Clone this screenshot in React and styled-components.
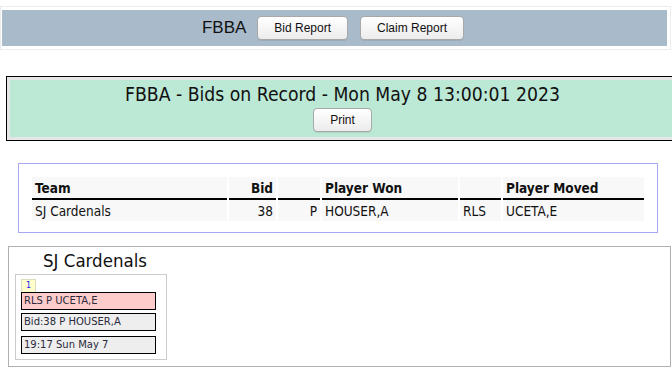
import React from "react";
import styled, { createGlobalStyle } from "styled-components";

const Global = createGlobalStyle`
  html, body { margin: 0; padding: 0; background: #fff; overflow: hidden; }
  body { font-family: "Liberation Sans", Arial, sans-serif; color: #000; }
`;

const Page = styled.div`
  display: flex;
  flex-direction: column;
  align-items: flex-start;
  padding-top: 6px;
`;

const TopFrame = styled.div`
  width: 671px;
  box-sizing: border-box;
  border: 1px solid #ececec;
  padding: 3px 3px 3px 1px;
`;

const TopBar = styled.div`
  height: 36px;
  background: #a9bbcb;
  display: flex;
  align-items: center;
  justify-content: center;
  gap: 11px;
  padding-right: 3px;
`;

const Brand = styled.span`
  font-family: "Liberation Sans", Arial, sans-serif;
  font-size: 17px;
  color: #111;
`;

const Button = styled.button`
  font-family: "Liberation Sans", Arial, sans-serif;
  font-size: 12px;
  color: #111;
  height: 24px;
  padding: 0 ${(p) => p.$pad || 16}px;
  border: 1px solid #a8a8a8;
  border-radius: 4px;
  background: linear-gradient(#ffffff, #ececec);
  box-shadow: 0 1px 0 rgba(0, 0, 0, 0.08);
  margin-left: ${(p) => p.$ml || 0}px;
`;

const TitleFrame = styled.div`
  margin: 26px 0 0 6px;
  width: 673px;
  box-sizing: border-box;
  border: 1px solid #000;
  background: #e6e6e6;
  padding: 3px;
`;

const TitleCell = styled.div`
  background: #bce8d6;
  height: 57px;
  box-sizing: border-box;
  padding-top: 4px;
  display: flex;
  flex-direction: column;
  align-items: center;
  gap: 2px;
`;

const Title = styled.div`
  font-family: "DejaVu Sans Condensed", "DejaVu Sans", sans-serif;
  font-stretch: condensed;
  font-size: 19.2px;
  line-height: 22px;
  color: #111;
`;

const TableBox = styled.div`
  margin: 22px 0 0 18px;
  width: 640px;
  box-sizing: border-box;
  border: 1px solid #a8a8f0;
  padding: 13px 11px 11px 11px;
`;

const Table = styled.table`
  width: 616px;
  border-collapse: separate;
  border-spacing: 2px 0;
  table-layout: fixed;
  font-family: "DejaVu Sans Condensed", "DejaVu Sans", sans-serif;
  font-stretch: condensed;
  font-size: 13.5px;
  color: #111;
`;

const Th = styled.th`
  background: #f8f8f8;
  border-bottom: 2px solid #000;
  height: 21px;
  padding: 0 3px;
  font-weight: bold;
  text-align: ${(p) => p.$align || "left"};
  vertical-align: middle;
`;

const Td = styled.td`
  background: #f8f8f8;
  height: 21px;
  padding: 0 3px;
  text-align: ${(p) => p.$align || "left"};
  vertical-align: middle;
`;

const TeamBox = styled.div`
  margin: 13px 0 0 8px;
  width: 663px;
  box-sizing: border-box;
  border: 1px solid #b0b0b0;
  padding: 0 6px 6px 6px;
`;

const TeamName = styled.div`
  width: 152px;
  padding-left: 4px;
  text-align: center;
  font-family: "DejaVu Sans Condensed", "DejaVu Sans", sans-serif;
  font-stretch: condensed;
  font-size: 18.5px;
  line-height: 27px;
  color: #111;
`;

const Card = styled.div`
  width: 152px;
  box-sizing: border-box;
  border: 1px solid #cccccc;
  padding: 4px 10px 5px 5px;
  display: flex;
  flex-direction: column;
  align-items: flex-start;
`;

const Badge = styled.div`
  width: 15px;
  height: 13px;
  box-sizing: border-box;
  background: #ffffcc;
  border: 1px solid #dcdcc0;
  border-bottom: none;
  font-family: "DejaVu Sans", sans-serif;
  font-size: 8px;
  line-height: 12px;
  color: #1a1aff;
  text-align: center;
`;

const Entry = styled.div`
  width: 135px;
  height: 18px;
  box-sizing: border-box;
  border: 1px solid #000;
  background: ${(p) => p.$bg};
  margin-top: ${(p) => p.$mt || 0}px;
  padding-left: 2px;
  font-family: "DejaVu Sans", sans-serif;
  font-size: 10px;
  line-height: 16px;
  color: #2a2a3a;
  white-space: nowrap;
`;

export default function App() {
  return (
    <>
      <Global />
      <Page>
        <TopFrame>
          <TopBar>
            <Brand>FBBA</Brand>
            <Button $pad={16}>Bid Report</Button>
            <Button $pad={16} $ml={1}>Claim Report</Button>
          </TopBar>
        </TopFrame>

        <TitleFrame>
          <TitleCell>
            <Title>FBBA - Bids on Record - Mon May 8 13:00:01 2023</Title>
            <Button $pad={16}>Print</Button>
          </TitleCell>
        </TitleFrame>

        <TableBox>
          <Table>
            <colgroup>
              <col style={{ width: 195 }} />
              <col style={{ width: 47 }} />
              <col style={{ width: 42 }} />
              <col style={{ width: 136 }} />
              <col style={{ width: 41 }} />
              <col />
            </colgroup>
            <thead>
              <tr>
                <Th>Team</Th>
                <Th $align="right">Bid</Th>
                <Th></Th>
                <Th>Player Won</Th>
                <Th></Th>
                <Th>Player Moved</Th>
              </tr>
            </thead>
            <tbody>
              <tr>
                <Td>SJ Cardenals</Td>
                <Td $align="right">38</Td>
                <Td $align="right">P</Td>
                <Td>HOUSER,A</Td>
                <Td>RLS</Td>
                <Td>UCETA,E</Td>
              </tr>
            </tbody>
          </Table>
        </TableBox>

        <TeamBox>
          <TeamName>SJ Cardenals</TeamName>
          <Card>
            <Badge>1</Badge>
            <Entry $bg="#ffcccc">RLS P UCETA,E</Entry>
            <Entry $bg="#eeeeee" $mt={3}>Bid:38 P HOUSER,A</Entry>
            <Entry $bg="#eeeeee" $mt={5}>19:17 Sun May 7</Entry>
          </Card>
        </TeamBox>
      </Page>
    </>
  );
}
